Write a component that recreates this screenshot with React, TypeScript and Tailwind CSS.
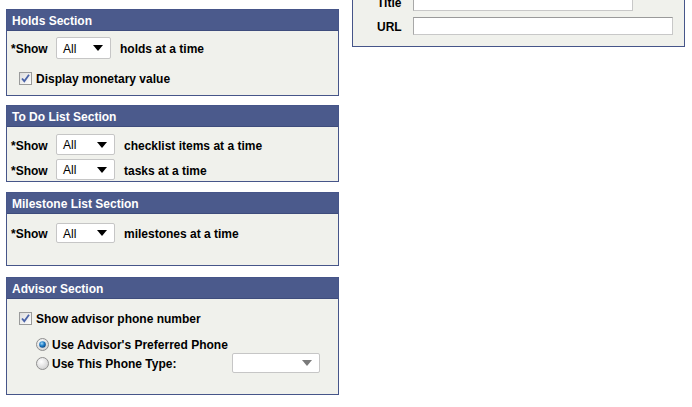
import React from "react";

const Select = ({ w, disabled }: { w: number; disabled?: boolean }) => (
  <div
    className={`relative flex items-center h-full bg-white border border-[#c6c6c6] rounded-[2px] pl-[6px] font-normal ${
      w === 55 ? "w-[55px]" : w === 88 ? "w-[88px]" : "w-[59px]"
    }`}
  >
    {!disabled && <span className="pt-[1px]">All</span>}
    <svg
      className="absolute right-[7px] top-1/2 -translate-y-1/2"
      width="10"
      height="6"
      viewBox="0 0 10 6"
    >
      <path d="M0 0 L10 0 L5 6 Z" fill={disabled ? "#7a7a7a" : "#000"} />
    </svg>
  </div>
);

const Checkbox = () => (
  <svg width="13" height="13" viewBox="0 0 13 13">
    <defs>
      <linearGradient id="cbg" x1="0" y1="0" x2="1" y2="1">
        <stop offset="0" stopColor="#dcdcdc" />
        <stop offset="1" stopColor="#ffffff" />
      </linearGradient>
    </defs>
    <rect x="0.5" y="0.5" width="12" height="12" fill="url(#cbg)" stroke="#9a9b9b" />
    <path d="M3 6.5 L5.3 9.2 L10 2.8" fill="none" stroke="#4a63a8" strokeWidth="1.8" />
  </svg>
);

const Radio = ({ on }: { on?: boolean }) => (
  <svg width="13" height="13" viewBox="0 0 13 13">
    <defs>
      <radialGradient id="rg" cx="0.4" cy="0.35" r="0.7">
        <stop offset="0" stopColor="#ffffff" />
        <stop offset="1" stopColor="#cfcfcf" />
      </radialGradient>
      <radialGradient id="rb" cx="0.4" cy="0.35" r="0.7">
        <stop offset="0" stopColor="#a9d8f5" />
        <stop offset="0.5" stopColor="#1e7fc8" />
        <stop offset="1" stopColor="#0b3f7a" />
      </radialGradient>
    </defs>
    <circle cx="6.5" cy="6.5" r="6" fill="url(#rg)" stroke="#8f8f8f" />
    {on && <circle cx="6.5" cy="6.5" r="3.3" fill="url(#rb)" />}
  </svg>
);

const Panel = ({
  title,
  bodyH,
  children,
}: {
  title: string;
  bodyH: string;
  children: React.ReactNode;
}) => (
  <div className="border border-[#465589] bg-[#f0f1ec]">
    <div className="h-[21px] bg-[#4b5a8c] border-b border-[#3e4c7c] text-white flex items-center pl-[5px]">
      <span className="pt-[2px]">{title}</span>
    </div>
    <div className={`${bodyH} pl-[4px]`}>{children}</div>
  </div>
);

const ShowRow = ({ text, w, h }: { text: string; w: number; h: string }) => (
  <div className={`flex items-center ${h}`}>
    <span className="w-[45px] pt-[2px]">*Show</span>
    <Select w={w} />
    <span className="ml-[9px] pt-[2px]">{text}</span>
  </div>
);

export default function App() {
  return (
    <div
      className="flex items-start pl-[6px] pt-[9px] text-[12px] font-bold text-black bg-white w-[692px] h-[407px] overflow-hidden leading-none"
      style={{ fontFamily: '"Liberation Sans", Arial, sans-serif' }}
    >
      <div className="w-[333px] flex flex-col">
        <Panel title="Holds Section" bodyH="h-[64px] pt-[6px]">
          <ShowRow text="holds at a time" w={55} h="h-[22px]" />
          <div className="flex items-center h-[22px] mt-[8px] pl-[8px] gap-[4px]">
            <Checkbox />
            <span className="pt-[2px]">Display monetary value</span>
          </div>
        </Panel>
        <div className="mt-[9px]">
          <Panel title="To Do List Section" bodyH="h-[54px] pt-[7px]">
            <ShowRow text="checklist items at a time" w={59} h="h-[21px]" />
            <div className="mt-[4px]">
              <ShowRow text="tasks at a time" w={59} h="h-[21px]" />
            </div>
          </Panel>
        </div>
        <div className="mt-[10px]">
          <Panel title="Milestone List Section" bodyH="h-[51px] pt-[9px]">
            <ShowRow text="milestones at a time" w={59} h="h-[20px]" />
          </Panel>
        </div>
        <div className="mt-[11px]">
          <Panel title="Advisor Section" bodyH="h-[95px] pt-[12px]">
            <div className="flex items-center h-[14px] pl-[8px] gap-[4px]">
              <Checkbox />
              <span className="pt-[2px]">Show advisor phone number</span>
            </div>
            <div className="flex items-center h-[14px] mt-[12px] pl-[25px] gap-[3px]">
              <Radio on />
              <span className="pt-[2px]">Use Advisor's Preferred Phone</span>
            </div>
            <div className="flex items-center h-[20px] mt-[2px] pl-[25px]">
              <Radio />
              <span className="ml-[3px] w-[180px] pt-[2px]">Use This Phone Type:</span>
              <Select w={88} disabled />
            </div>
          </Panel>
        </div>
      </div>
      <div className="ml-[13px] w-[333px] -mt-[29px] border border-[#465589] bg-[#f0f1ec] pt-[12px] pb-[11px] pl-[24px] flex flex-col gap-[6px]">
        <div className="flex items-center h-[18px]">
          <span className="w-[36px] pt-[2px]">Title</span>
          <div className="w-[220px] h-full bg-white border border-[#c8c8c8] border-t-[#9a9a9a] border-l-[#a8a8a8]" />
        </div>
        <div className="flex items-center h-[18px]">
          <span className="w-[36px] pt-[2px]">URL</span>
          <div className="w-[260px] h-full bg-white border border-[#c8c8c8] border-t-[#9a9a9a] border-l-[#a8a8a8]" />
        </div>
      </div>
    </div>
  );
}
